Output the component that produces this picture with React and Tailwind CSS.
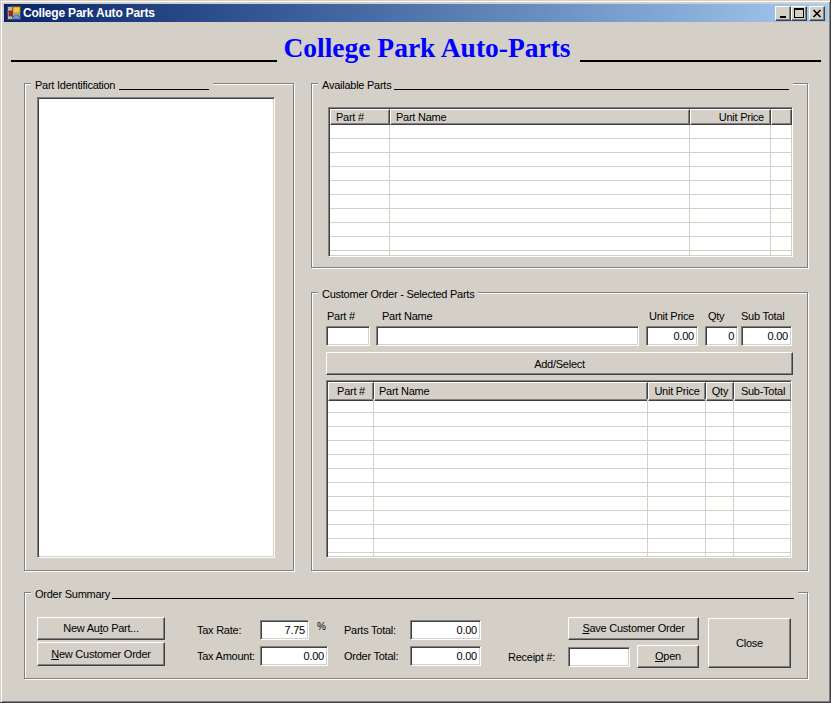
import { Fragment } from "react";

const raised = "bg-[#d4d0c8] border border-t-white border-l-white border-r-[#404040] border-b-[#404040] shadow-[inset_-1px_-1px_0_#808080]";
const sunken = "bg-white border border-t-[#808080] border-l-[#808080] border-r-white border-b-white shadow-[inset_1px_1px_0_#404040,inset_-1px_-1px_0_#d4d0c8]";

function GroupBox({ title, lineClass, className, children }) {
  return (
    <div className={`relative border border-[#808080] shadow-[inset_1px_1px_0_#fff,1px_1px_0_#fff] ${className}`}>
      <div className="absolute left-[6px] -top-[8px] flex items-end bg-[#d4d0c8] px-[4px] h-[18px] leading-[18px]">
        <span className="whitespace-nowrap">{title}</span>
        {lineClass && <div className={`border-b border-black mb-[4px] ${lineClass}`}></div>}
      </div>
      {children}
    </div>
  );
}

function TextBox({ value, className }) {
  return (
    <div className={`${sunken} h-5 px-[3px] text-right leading-[18px] ${className}`}>{value}</div>
  );
}

function Button({ children, className }) {
  return (
    <div className={`${raised} flex items-center justify-center ${className}`}>{children}</div>
  );
}

function Label({ children, className }) {
  return <div className={`whitespace-nowrap ${className}`}>{children}</div>;
}

function Grid({ columns, rows, trailing, headerClass, className }) {
  const template = columns.map((c) => `${c.width}px`).join(" ") + (trailing ? " 1fr" : "");
  const cells = trailing ? [...columns, { label: "", width: 0 }] : columns;
  return (
    <div className={`${sunken} overflow-hidden ${className}`}>
      <div className={`grid mt-px ml-px ${headerClass}`} style={{ gridTemplateColumns: template }}>
        {cells.map((c, i) => (
          <div
            key={i}
            className={`${raised} whitespace-nowrap ${c.right ? "text-right px-1.5" : c.center ? "text-center" : c.tight ? "pl-[4px]" : "pl-[5px]"}`}
          >
            {c.label}
          </div>
        ))}
      </div>
      <div className="grid ml-px" style={{ gridTemplateColumns: template }}>
        {Array.from({ length: rows }).map((_, r) => (
          <Fragment key={r}>
            {cells.map((c, i) => (
              <div key={i} className="h-[14px] border-r border-b border-[#d4d0c8]"></div>
            ))}
          </Fragment>
        ))}
      </div>
    </div>
  );
}

function WindowIcon() {
  return (
    <svg width="14" height="14" viewBox="0 0 14 14" className="shrink-0">
      <rect x="0.5" y="0.5" width="13" height="13" fill="#b8b8b0" stroke="#404050" />
      <path d="M0 5.5H5M5.5 0V14M5 10.5H14" stroke="#606070" strokeWidth="1" />
      <rect x="6" y="1" width="7" height="6" fill="#f8c830" stroke="#a07010" strokeWidth="0.6" />
      <rect x="2" y="5" width="3" height="5" fill="#c82020" stroke="#701010" strokeWidth="0.6" />
      <rect x="7" y="9" width="5" height="4" fill="#70a0e0" stroke="#305090" strokeWidth="0.6" />
    </svg>
  );
}

function CaptionButton({ children }) {
  return (
    <div className={`${raised} w-4 h-[15px] relative`}>{children}</div>
  );
}

export default function App() {
  return (
    <div
      className="w-[831px] h-[703px] flex flex-col bg-[#d4d0c8] text-black text-[11px] tracking-[-0.25px] overflow-hidden border-r border-b border-[#404040] pt-1 pl-1 pr-0.5 shadow-[inset_1px_1px_0_#d4d0c8,inset_2px_2px_0_#fff,inset_-1px_-1px_0_#808080]"
      style={{ fontFamily: '"Liberation Sans", Arial, sans-serif' }}
    >
      {/* Title bar */}
      <div className="h-[18px] shrink-0 flex items-center pl-[3px] pr-[3px] bg-gradient-to-r from-[#0a246a] to-[#a6caf0]">
        <WindowIcon />
        <div className="ml-[2px] text-white font-bold text-[12px] tracking-[-0.2px]">College Park Auto Parts</div>
        <div className="ml-auto flex items-center">
          <CaptionButton>
            <div className="absolute left-[4px] bottom-[2px] w-[6px] h-[2px] bg-black"></div>
          </CaptionButton>
          <CaptionButton>
            <div className="absolute left-[2px] top-[1px] w-[10px] h-[10px] border border-t-2 border-black"></div>
          </CaptionButton>
          <div className="ml-0.5">
            <CaptionButton>
              <svg width="14" height="13" viewBox="0 0 14 13" className="absolute left-0 top-0">
                <path d="M3.5 3 L10.5 10 M10.5 3 L3.5 10" stroke="black" strokeWidth="1.6" />
              </svg>
            </CaptionButton>
          </div>
        </div>
      </div>

      {/* Heading */}
      <div className="h-[40px] shrink-0 flex items-end pl-[7px] pr-[7px]">
        <div className="w-[266px] h-0.5 bg-black"></div>
        <div
          className="flex-1 text-center text-[#0000ff] font-bold text-[27.5px] tracking-normal leading-[31px] mb-[-1px] pr-[3px] whitespace-nowrap"
          style={{ fontFamily: '"Liberation Serif", "Times New Roman", serif' }}
        >
          College Park Auto-Parts
        </div>
        <div className="w-[241px] h-0.5 bg-black"></div>
      </div>

      <div className="flex-1 flex flex-col pt-[21px] px-5">
        <div className="flex gap-[17px]">
          {/* Part Identification */}
          <GroupBox title="Part Identification" lineClass="w-[90px] ml-[4px]" className="w-[270px] h-[488px] pt-[13px] pl-[12px] shrink-0">
            <div className={`${sunken} w-[238px] h-[461px]`}></div>
          </GroupBox>

          <div className="flex-1 flex flex-col gap-[24px]">
            {/* Available Parts */}
            <GroupBox title="Available Parts" lineClass="w-[395px] ml-[3px]" className="h-[185px] pt-[23px] pl-[16px]">
              <Grid
                className="w-[465px] h-[150px]"
                headerClass="h-[16px] leading-[14px]"
                rows={10}
                trailing
                columns={[
                  { label: "Part #", width: 60 },
                  { label: "Part Name", width: 300 },
                  { label: "Unit Price", width: 81, right: true },
                ]}
              />
            </GroupBox>

            {/* Customer Order */}
            <GroupBox title="Customer Order - Selected Parts" className="h-[279px] pt-[15px] pl-[14px]">
              <div className="flex leading-[16px] h-[18px]">
                <Label className="w-[56px] pl-px">Part #</Label>
                <Label className="w-[267px]">Part Name</Label>
                <Label className="w-[59px]">Unit Price</Label>
                <Label className="w-[33px]">Qty</Label>
                <Label>Sub Total</Label>
              </div>
              <div className="flex">
                <TextBox className="w-[44px]" />
                <TextBox className="w-[263px] ml-[6px]" />
                <TextBox value="0.00" className="w-[52px] ml-[7px]" />
                <TextBox value="0" className="w-[33px] ml-[7px]" />
                <TextBox value="0.00" className="w-[51px] ml-[3px]" />
              </div>
              <Button className="w-[467px] h-[23px] mt-[6px] pt-px">Add/Select</Button>
              <Grid
                className="w-[466px] h-[178px] mt-[5px]"
                headerClass="h-[17px] leading-[17px]"
                rows={12}
                columns={[
                  { label: "Part #", width: 46, center: true },
                  { label: "Part Name", width: 274, tight: true },
                  { label: "Unit Price", width: 58, center: true },
                  { label: "Qty", width: 28, center: true },
                  { label: "Sub-Total", width: 58, center: true },
                ]}
              />
            </GroupBox>
          </div>
        </div>

        {/* Order Summary */}
        <GroupBox title="Order Summary" lineClass="w-[682px] ml-[2px]" className="h-[87px] mt-[21px] flex pt-[24px] pl-[12px]">
          <div className="flex flex-col gap-[2px] w-[128px] shrink-0">
            <Button className="h-[23px]">
              <span>New Au<span className="underline">t</span>o Part...</span>
            </Button>
            <Button className="h-[24px]">
              <span><span className="underline">N</span>ew Customer Order</span>
            </Button>
          </div>
          <div className="grid grid-cols-[63px_68px] gap-y-[6px] ml-[32px] mt-[3px] h-[46px] items-center">
            <Label>Tax Rate:</Label>
            <div className="flex items-start">
              <TextBox value="7.75" className="w-[49px]" />
              <span className="ml-[8px] leading-[13px] text-[10px]">%</span>
            </div>
            <Label>Tax Amount:</Label>
            <TextBox value="0.00" className="w-[68px]" />
          </div>
          <div className="grid grid-cols-[66px_71px] gap-y-[6px] ml-[16px] mt-[3px] h-[46px] items-center">
            <Label>Parts Total:</Label>
            <TextBox value="0.00" />
            <Label>Order Total:</Label>
            <TextBox value="0.00" />
          </div>
          <div className="w-[60px] ml-[27px] mt-[32px] leading-[16px]">Receipt #:</div>
          <div className="flex flex-col w-[131px] gap-[5px]">
            <Button className="h-[23px]">
              <span><span className="underline">S</span>ave Customer Order</span>
            </Button>
            <div className="flex gap-[7px]">
              <TextBox className="w-[62px] mt-[2px]" />
              <Button className="h-[23px] flex-1">
                <span><span className="underline">O</span>pen</span>
              </Button>
            </div>
          </div>
          <Button className="w-[83px] h-[50px] ml-[9px] mt-px">Close</Button>
        </GroupBox>
      </div>
    </div>
  );
}
